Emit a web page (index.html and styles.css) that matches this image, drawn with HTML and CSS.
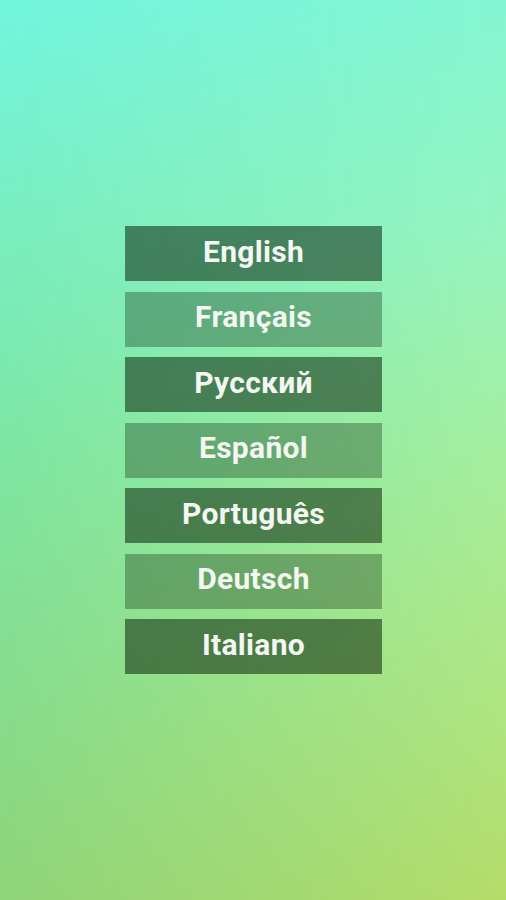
FILE: index.html
```html
<!DOCTYPE html>
<html lang="en">

<head>
    <meta charset="UTF-8">
    <meta name="viewport" content="width=device-width, initial-scale=1.0">
    <title>Choose Language</title>
    <link rel="stylesheet" href="styles.css">
</head>

<body>
    <div class="screen">
        <div class="lang-list">
            <button class="lang-button dark">English</button>
            <button class="lang-button light">Français</button>
            <button class="lang-button dark">Русский</button>
            <button class="lang-button light">Español</button>
            <button class="lang-button dark">Português</button>
            <button class="lang-button light">Deutsch</button>
            <button class="lang-button dark">Italiano</button>
        </div>
    </div>
</body>

</html>
```

FILE: styles.css
```css
html,
body {
    margin: 0;
    height: 100%;
}

body {
    font-family: Roboto, "Liberation Sans", Arial, sans-serif;
    /* left edge colours */
    background: linear-gradient(to bottom, #72f5de 0%, #79eec0 25%, #7de6a3 50%, #86dd8e 75%, #8fd57a 100%);
}

.screen {
    position: relative;
    height: 900px;
    display: flex;
    align-items: center;
    justify-content: center;
}

/* right edge colours, faded in from the left */
.screen::before {
    content: "";
    position: absolute;
    inset: 0;
    background: linear-gradient(to bottom, #84f5d2 0%, #95f4c0 25%, #a5ee9f 50%, #aee684 75%, #b4dc6a 100%);
    -webkit-mask-image: linear-gradient(to right, transparent, #000);
    mask-image: linear-gradient(to right, transparent, #000);
}

.lang-list {
    position: relative;
    display: flex;
    flex-direction: column;
    gap: 10.5px;
    width: 257px;
    margin-left: 1px;
}

.lang-button {
    height: 55px;
    border: none;
    border-radius: 0;
    color: #f4f6f2;
    font-family: Roboto, "Liberation Sans", Arial, sans-serif;
    font-size: 30px;
    font-weight: 700;
    letter-spacing: 0.3px;
    padding: 0 0 5px;
    cursor: pointer;
}

.dark {
    background-color: rgba(0, 20, 0, 0.5);
}

.light {
    background-color: rgba(0, 20, 0, 0.3);
}
```
